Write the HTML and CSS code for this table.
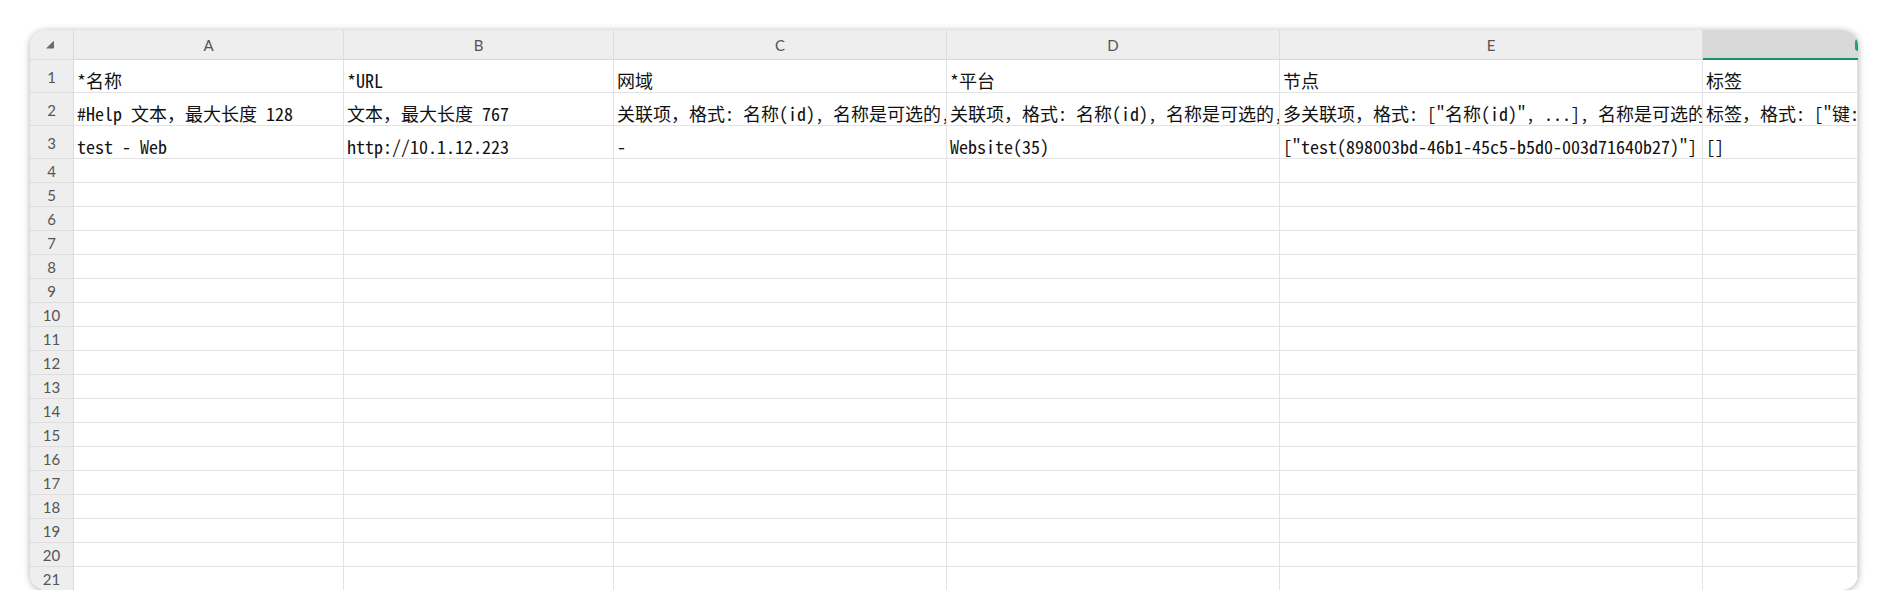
FILE: index.html
```html
<!DOCTYPE html>
<html lang="zh-CN">
<head>
<meta charset="utf-8">
<title>Sheet</title>
<link rel="stylesheet" href="styles.css">
</head>
<body>
<div class="card">
  <div class="row head">
    <div class="corner"><span class="tri"></span></div>
    <div class="ch">A</div>
    <div class="ch">B</div>
    <div class="ch">C</div>
    <div class="ch">D</div>
    <div class="ch">E</div>
    <div class="ch sel"><span class="mark"></span></div>
  </div>
  <div class="row tall">
    <div class="rh">1</div>
    <div class="c">*名称</div>
    <div class="c">*URL</div>
    <div class="c">网域</div>
    <div class="c">*平台</div>
    <div class="c">节点</div>
    <div class="c">标签</div>
  </div>
  <div class="row tall">
    <div class="rh">2</div>
    <div class="c">#Help 文本，最大长度 128</div>
    <div class="c">文本，最大长度 767</div>
    <div class="c">关联项，格式: 名称(id), 名称是可选的,</div>
    <div class="c">关联项，格式: 名称(id), 名称是可选的,</div>
    <div class="c">多关联项，格式: ["名称(id)", ...], 名称是可选的</div>
    <div class="c">标签，格式: ["键:</div>
  </div>
  <div class="row tall">
    <div class="rh">3</div>
    <div class="c">test - Web</div>
    <div class="c">http://10.1.12.223</div>
    <div class="c">-</div>
    <div class="c">Website(35)</div>
    <div class="c">["test(898003bd-46b1-45c5-b5d0-003d71640b27)"]</div>
    <div class="c">[]</div>
  </div>
  <div class="row"><div class="rh">4</div><div class="c"></div><div class="c"></div><div class="c"></div><div class="c"></div><div class="c"></div><div class="c"></div></div>
  <div class="row"><div class="rh">5</div><div class="c"></div><div class="c"></div><div class="c"></div><div class="c"></div><div class="c"></div><div class="c"></div></div>
  <div class="row"><div class="rh">6</div><div class="c"></div><div class="c"></div><div class="c"></div><div class="c"></div><div class="c"></div><div class="c"></div></div>
  <div class="row"><div class="rh">7</div><div class="c"></div><div class="c"></div><div class="c"></div><div class="c"></div><div class="c"></div><div class="c"></div></div>
  <div class="row"><div class="rh">8</div><div class="c"></div><div class="c"></div><div class="c"></div><div class="c"></div><div class="c"></div><div class="c"></div></div>
  <div class="row"><div class="rh">9</div><div class="c"></div><div class="c"></div><div class="c"></div><div class="c"></div><div class="c"></div><div class="c"></div></div>
  <div class="row"><div class="rh">10</div><div class="c"></div><div class="c"></div><div class="c"></div><div class="c"></div><div class="c"></div><div class="c"></div></div>
  <div class="row"><div class="rh">11</div><div class="c"></div><div class="c"></div><div class="c"></div><div class="c"></div><div class="c"></div><div class="c"></div></div>
  <div class="row"><div class="rh">12</div><div class="c"></div><div class="c"></div><div class="c"></div><div class="c"></div><div class="c"></div><div class="c"></div></div>
  <div class="row"><div class="rh">13</div><div class="c"></div><div class="c"></div><div class="c"></div><div class="c"></div><div class="c"></div><div class="c"></div></div>
  <div class="row"><div class="rh">14</div><div class="c"></div><div class="c"></div><div class="c"></div><div class="c"></div><div class="c"></div><div class="c"></div></div>
  <div class="row"><div class="rh">15</div><div class="c"></div><div class="c"></div><div class="c"></div><div class="c"></div><div class="c"></div><div class="c"></div></div>
  <div class="row"><div class="rh">16</div><div class="c"></div><div class="c"></div><div class="c"></div><div class="c"></div><div class="c"></div><div class="c"></div></div>
  <div class="row"><div class="rh">17</div><div class="c"></div><div class="c"></div><div class="c"></div><div class="c"></div><div class="c"></div><div class="c"></div></div>
  <div class="row"><div class="rh">18</div><div class="c"></div><div class="c"></div><div class="c"></div><div class="c"></div><div class="c"></div><div class="c"></div></div>
  <div class="row"><div class="rh">19</div><div class="c"></div><div class="c"></div><div class="c"></div><div class="c"></div><div class="c"></div><div class="c"></div></div>
  <div class="row"><div class="rh">20</div><div class="c"></div><div class="c"></div><div class="c"></div><div class="c"></div><div class="c"></div><div class="c"></div></div>
  <div class="row"><div class="rh">21</div><div class="c"></div><div class="c"></div><div class="c"></div><div class="c"></div><div class="c"></div><div class="c"></div></div>
</div>
</body>
</html>
```
FILE: styles.css
```css
* { box-sizing: border-box; }
html, body { margin: 0; padding: 0; background: #ffffff; }
body { padding: 30px 0 0 30px; }

.card {
  width: 1828px;
  height: 560px;
  border-radius: 16px;
  overflow: hidden;
  background: #ffffff;
  box-shadow: 0 1px 7px rgba(0, 0, 0, 0.32);
  display: flex;
  flex-direction: column;
}

.row {
  display: grid;
  grid-template-columns: 44px 270px 270px 333px 333px 423px 155px;
  height: 24px;
  flex: none;
}
.row.head { height: 30px; }
.row.tall { height: 33px; }

.corner, .ch, .rh {
  background: #eeeeee;
  font-family: "Lato", "Open Sans", sans-serif;
  font-size: 15px;
  color: #555555;
  display: flex;
  align-items: center;
  justify-content: center;
}

.corner {
  border-right: 1px solid #dcdcdc;
  border-bottom: 1px solid #dcdcdc;
  padding: 0 0 0 2px;
}
.tri {
  width: 8px;
  height: 8px;
  background: #6b6b6b;
  clip-path: polygon(100% 0, 100% 100%, 0 100%);
  border-radius: 1px;
  margin: 0 5px 0 0;
}

.ch {
  border-right: 1px solid #dedede;
  border-bottom: 1px solid #d8d8d8;
  padding-top: 1px;
}
.ch.sel {
  background: #d9d9d9;
  border-right: none;
  border-bottom: 2px solid #12956b;
  justify-content: flex-end;
}
.mark {
  width: 3px;
  height: 12px;
  border-radius: 3px 0 0 3px;
  background: #1fa27a;
}

.rh {
  border-right: 1px solid #dcdcdc;
  border-bottom: 1px solid #dedede;
  padding-top: 1px;
}

.c {
  border-right: 1px solid #e3e3e3;
  border-bottom: 1px solid #e3e3e3;
  font-family: "Noto Sans Mono CJK SC", "Liberation Mono", "Noto Sans CJK SC", monospace;
  font-size: 18px;
  line-height: 18px;
  color: #111111;
  white-space: nowrap;
  overflow: hidden;
  display: flex;
  align-items: flex-end;
  padding: 0 0 3px 3px;
}
```
